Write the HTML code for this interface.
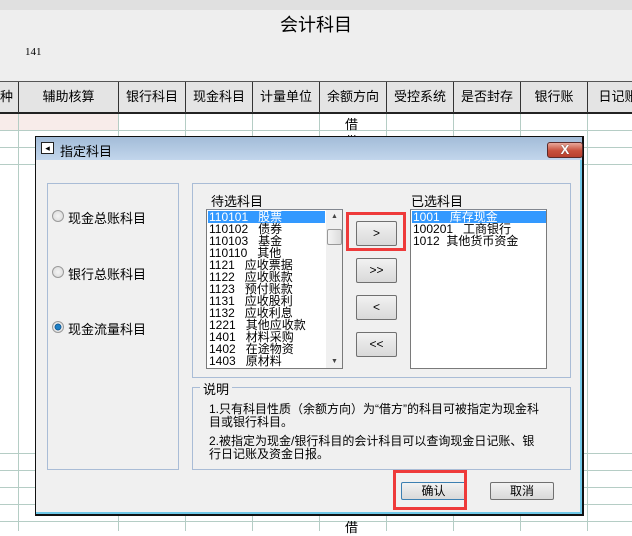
<!DOCTYPE html>
<html><head><meta charset="utf-8"><style>
*{margin:0;padding:0;box-sizing:border-box}
body{width:632px;height:531px;overflow:hidden;background:#fff;position:relative;font-family:"Liberation Sans","Noto Sans CJK SC","WenQuanYi Zen Hei",sans-serif;font-size:12px;color:#000}
.a{position:absolute}
.top{left:0;top:0;width:632px;height:81px;background:#eeeeee}
.hdr{left:0;top:81px;width:632px;height:33px;background:#e4e4e4;border-top:1px solid #555;border-bottom:2px solid #222}
.hc{position:absolute;top:0;height:31px;line-height:30px;text-align:center;font-size:13px;border-right:1px solid #333}
.vl{position:absolute;top:114px;width:1px;height:417px;background:#b5cdc5}
.hl{position:absolute;left:0;width:632px;height:1px;background:#b5cdc5}
.dlg{left:35px;top:136px;width:549px;height:380px;border:1px solid #111;border-right:2px solid #111;border-bottom:2px solid #111;background:#f0f0f0;box-shadow:inset -2px -2px 0 #6ec8e8}
.tb{left:36px;top:137px;width:546px;height:23px;background:linear-gradient(#a3bcd8,#c2d6ec)}
.gb{border:1px solid #a9bcd6}
.lst{background:#fff;border:1px solid #7a7a7a;border-top-color:#828790}
.it{position:absolute;left:2px;height:12px;line-height:12px;font-size:12px;white-space:pre}
.btn{position:absolute;border:1px solid #707070;border-radius:2px;background:linear-gradient(#f2f2f2,#e5e5e5 50%,#d9d9d9);text-align:center;font-size:12px}
.red{position:absolute;border:3px solid #ee3a3a}
.rad{position:absolute;width:12px;height:12px;border-radius:50%;border:1px solid #9a9a9a;background:radial-gradient(#f4f4f4,#d8d8d8)}
</style></head><body>
<div class="a top"></div>
<div class="a" style="left:0;top:0;width:632px;height:10px;background:#e0e0e0"></div>
<div class="a" style="left:280px;top:11px;font-size:18px">会计科目</div>
<div class="a" style="left:25px;top:46px;font-size:11px;font-family:'Liberation Serif',serif">141</div>
<div class="a hdr">
<div class="hc" style="left:0;width:19px;text-align:left">种</div>
<div class="hc" style="left:19px;width:100px">辅助核算</div>
<div class="hc" style="left:119px;width:67px">银行科目</div>
<div class="hc" style="left:186px;width:67px">现金科目</div>
<div class="hc" style="left:253px;width:67px">计量单位</div>
<div class="hc" style="left:320px;width:67px">余额方向</div>
<div class="hc" style="left:387px;width:67px">受控系统</div>
<div class="hc" style="left:454px;width:67px">是否封存</div>
<div class="hc" style="left:521px;width:67px">银行账</div>
<div class="hc" style="left:588px;width:60px;border:none">日记账</div>
</div>
<div class="a" style="left:0;top:114px;width:118px;height:16px;background:#f8ecea"></div>
<div class="vl" style="left:18px"></div><div class="vl" style="left:118px"></div><div class="vl" style="left:185px"></div><div class="vl" style="left:252px"></div><div class="vl" style="left:319px"></div><div class="vl" style="left:386px"></div><div class="vl" style="left:453px"></div><div class="vl" style="left:520px"></div><div class="vl" style="left:587px"></div>
<div class="hl" style="top:130px"></div><div class="hl" style="top:147px"></div><div class="hl" style="top:164px"></div>
<div class="hl" style="top:453px"></div><div class="hl" style="top:470px"></div><div class="hl" style="top:487px"></div><div class="hl" style="top:504px"></div><div class="hl" style="top:521px"></div>
<div class="a" style="left:345px;top:114px;font-size:13px">借</div>
<div class="a" style="left:345px;top:131px;font-size:13px">借</div>
<div class="a" style="left:345px;top:517px;font-size:13px">借</div>

<div class="a dlg"></div>
<div class="a tb"></div>
<div class="a" style="left:41px;top:142px;width:13px;height:12px;border:1px solid #222;background:#fff;font-size:9px;line-height:10px;text-align:center">◂</div>
<div class="a" style="left:60px;top:141px;font-size:13px">指定科目</div>
<div class="a" style="left:547px;top:142px;width:36px;height:16px;border:1px solid #5a2a2a;border-radius:3px;background:linear-gradient(#e8a89a,#c8503c 55%,#b8402e);color:#fff;text-align:center;font-weight:bold;font-size:13px;line-height:14px;text-shadow:0 0 1px #333">X</div>

<div class="a gb" style="left:47px;top:183px;width:132px;height:287px"></div>
<div class="rad" style="left:52px;top:210px"></div><div class="a" style="left:68px;top:208px;font-size:13px">现金总账科目</div>
<div class="rad" style="left:52px;top:266px"></div><div class="a" style="left:68px;top:264px;font-size:13px">银行总账科目</div>
<div class="rad" style="left:52px;top:321px;background:radial-gradient(#1e7fc4 30%,#0a4f8a 45%,#e8e8e8 50%)"></div><div class="a" style="left:68px;top:319px;font-size:13px">现金流量科目</div>

<div class="a gb" style="left:192px;top:183px;width:379px;height:195px"></div>
<div class="a" style="left:211px;top:191px;font-size:13px">待选科目</div>
<div class="a" style="left:411px;top:191px;font-size:13px">已选科目</div>
<div class="a lst" style="left:206px;top:209px;width:137px;height:160px;overflow:hidden">
<div class="a" style="left:1px;top:1px;width:117px;height:12px;background:#3399ff"></div>
<div class="it" style="top:1px;color:#fff">110101   股票</div>
<div class="it" style="top:13px">110102   债券</div>
<div class="it" style="top:25px">110103   基金</div>
<div class="it" style="top:37px">110110   其他</div>
<div class="it" style="top:49px">1121   应收票据</div>
<div class="it" style="top:61px">1122   应收账款</div>
<div class="it" style="top:73px">1123   预付账款</div>
<div class="it" style="top:85px">1131   应收股利</div>
<div class="it" style="top:97px">1132   应收利息</div>
<div class="it" style="top:109px">1221   其他应收款</div>
<div class="it" style="top:121px">1401   材料采购</div>
<div class="it" style="top:133px">1402   在途物资</div>
<div class="it" style="top:145px">1403   原材料</div>
<div class="a" style="left:119px;top:0;width:17px;height:158px;background:#f0f0f0"></div>
<div class="a" style="left:124px;top:3px;font-size:7px;color:#444">▲</div>
<div class="a" style="left:124px;top:148px;font-size:7px;color:#444">▼</div>
<div class="a" style="left:120px;top:19px;width:15px;height:16px;border:1px solid #999;border-radius:2px;background:linear-gradient(90deg,#f4f4f4,#dcdcdc)"></div>
</div>
<div class="a lst" style="left:410px;top:209px;width:137px;height:160px">
<div class="a" style="left:1px;top:1px;width:134px;height:12px;background:#3399ff"></div>
<div class="it" style="top:1px;color:#fff">1001   库存现金</div>
<div class="it" style="top:13px">100201   工商银行</div>
<div class="it" style="top:25px">1012  其他货币资金</div>
</div>
<div class="btn" style="left:356px;top:221px;width:41px;height:25px;line-height:23px">&gt;</div>
<div class="btn" style="left:356px;top:258px;width:41px;height:25px;line-height:23px">&gt;&gt;</div>
<div class="btn" style="left:356px;top:295px;width:41px;height:25px;line-height:23px">&lt;</div>
<div class="btn" style="left:356px;top:332px;width:41px;height:25px;line-height:23px">&lt;&lt;</div>
<div class="red" style="left:346px;top:212px;width:60px;height:39px"></div>

<div class="a gb" style="left:192px;top:387px;width:379px;height:83px"></div>
<div class="a" style="left:200px;top:379px;padding:0 3px;background:#f0f0f0;font-size:13px">说明</div>
<div class="a" style="left:209px;top:403px;line-height:13px;font-size:12px">1.只有科目性质（余额方向）为“借方”的科目可被指定为现金科<br>目或银行科目。</div>
<div class="a" style="left:209px;top:435px;line-height:13px;font-size:12px">2.被指定为现金/银行科目的会计科目可以查询现金日记账、银<br>行日记账及资金日报。</div>

<div class="btn" style="left:401px;top:482px;width:65px;height:18px;line-height:16px;border-color:#3c7fb1">确认</div>
<div class="btn" style="left:490px;top:482px;width:64px;height:18px;line-height:16px">取消</div>
<div class="red" style="left:393px;top:470px;width:74px;height:40px"></div>
</body></html>
